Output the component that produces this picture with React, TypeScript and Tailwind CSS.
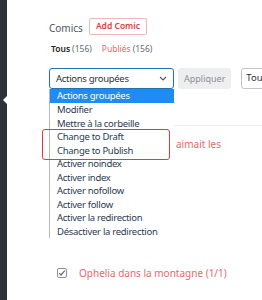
import React from "react";

const items = [
  "Modifier",
  "Mettre à la corbeille",
  "Change to Draft",
  "Change to Publish",
  "Activer noindex",
  "Activer index",
  "Activer nofollow",
  "Activer follow",
  "Activer la redirection",
  "Désactiver la redirection",
];

export default function App() {
  return (
    <div
      className="relative flex w-[262px] h-[300px] overflow-hidden bg-white"
      style={{ fontFamily: '"Noto Sans", "Open Sans", sans-serif' }}
    >
      {/* sidebar */}
      <div className="relative w-[7px] shrink-0 bg-[#2c3338]">
        <div className="absolute left-[3px] top-[96px] w-0 h-0 border-y-[4px] border-y-transparent border-r-[4px] border-r-white" />
      </div>

      {/* main */}
      <div className="flex-1 pl-[42px] pt-[18px]">
        <div className="flex items-center h-[17px] gap-[6px]">
          <span className="pt-[3px] text-[10px] leading-none text-[#50575e]">Comics</span>
          <span className="flex items-center h-[17px] px-[6px] border border-[#f2b8b8] rounded-[2px] text-[8.5px] font-semibold text-[#e0403d] bg-white">
            Add Comic
          </span>
        </div>

        <div className="mt-[8px] flex items-center h-[12px] text-[8.5px] leading-none">
          <span className="ml-[2px] font-semibold text-[#1d2327]">Tous</span>
          <span className="ml-[2px] text-[#646970]">(156)</span>
          <span className="ml-[10px] text-[#e86a6a]">Publiés</span>
          <span className="ml-[2px] text-[#646970]">(156)</span>
        </div>

        <div className="mt-[13px] flex items-center gap-[4px] h-[21px]">
          <div className="relative w-[125px] h-[21px] shrink-0">
            <div className="flex items-center justify-between h-full pl-[6px] pr-[6px] border border-[#2271b1] rounded-[3px] bg-white">
              <span className="text-[9.5px] tracking-[-0.3px] leading-none text-[#2c3338]">Actions groupées</span>
              <svg width="8" height="5" viewBox="0 0 8 5" fill="none">
                <path d="M1 1l3 3 3-3" stroke="#50575e" strokeWidth="1.1" />
              </svg>
            </div>
            <div className="absolute left-0 top-[21px] w-[125px] z-10 bg-white border-l border-[#b4b9be]">
              <div className="h-[14px] flex items-center pl-[7px] bg-[#1e8cf5] text-white text-[9.5px] tracking-[-0.3px] leading-none">
                Actions groupées
              </div>
              {items.map((t) => (
                <div
                  key={t}
                  className="h-[13.5px] flex items-center pl-[7px] text-[9.5px] tracking-[-0.3px] leading-none text-[#2a3b52] whitespace-nowrap"
                >
                  {t}
                </div>
              ))}
            </div>
          </div>
          <div className="flex items-center h-[21px] px-[6px] bg-[#eceeef] rounded-[3px] text-[9px] text-[#8c9196] shrink-0">
            Appliquer
          </div>
          <div className="ml-[6px] flex items-center h-[21px] pl-[4px] w-[40px] shrink-0 border border-[#c3c4c7] rounded-[3px] text-[9.5px] text-[#2c3338] overflow-hidden">
            Tous
          </div>
        </div>

        {/* table */}
        <div className="mt-[36px] border-t border-[#ececec]">
          <div className="h-[36px] flex items-center pl-[127px] text-[10px] leading-none text-[#e86a6a]">
            aimait les
          </div>
          <div className="h-[101px]" />
          <div className="flex items-center gap-[12px] pl-[8px] h-[20px]">
            <div className="w-[10px] h-[10px] border border-[#8c8f94] rounded-[2px] flex items-center justify-center">
              <svg width="8" height="8" viewBox="0 0 8 8" fill="none">
                <path d="M1.2 4.2l1.8 1.8L6.8 1.6" stroke="#646970" strokeWidth="1.2" />
              </svg>
            </div>
            <span className="text-[10px] leading-none text-[#e86a6a] whitespace-nowrap">Ophelia dans la montagne (1/1)</span>
          </div>
        </div>
      </div>

      {/* annotation box */}
      <div className="absolute left-[42px] top-[129px] w-[128px] h-[31px] border-[1.5px] border-[#e5393a] rounded-[3px] z-20" />
    </div>
  );
}
